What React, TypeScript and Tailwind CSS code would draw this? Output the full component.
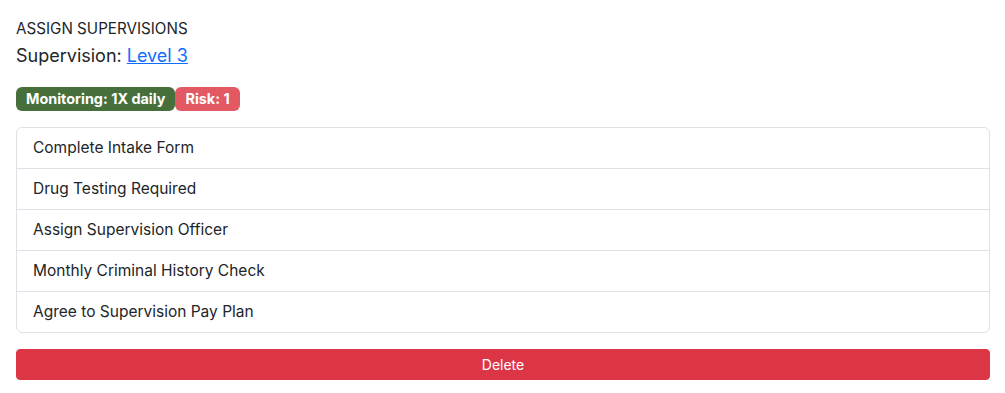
const tasks = [
  "Complete Intake Form",
  "Drug Testing Required",
  "Assign Supervision Officer",
  "Monthly Criminal History Check",
  "Agree to Supervision Pay Plan",
];

export default function App() {
  return (
    <div className="min-h-screen bg-white pl-4 pr-[15px] pt-[18px] font-['Inter',sans-serif] text-[#212529]">
      <div className="text-[15.2px] leading-[22px]">ASSIGN SUPERVISIONS</div>
      <div className="mt-[3px] text-[18px] leading-[26px]">
        Supervision:{" "}
        <a href="#" className="text-[#0d6efd] underline">
          Level 3
        </a>
      </div>

      <div className="mt-[18px] flex">
        <span className="rounded-[6px] bg-[#476f3b] px-[10px] py-[4px] text-[14.4px] font-bold leading-[16px] text-white">
          Monitoring: 1X daily
        </span>
        <span className="rounded-[6px] bg-[#e25963] px-[10px] py-[4px] text-[14.4px] font-bold leading-[16px] text-white">
          Risk: 1
        </span>
      </div>

      <ul className="mt-[16px] rounded-[6px] border border-[#dee2e6]">
        {tasks.map((t, i) => (
          <li
            key={t}
            className={
              "px-4 py-[8px] text-[15.5px] leading-[24px] " +
              (i > 0 ? "border-t border-[#dee2e6]" : "")
            }
          >
            {t}
          </li>
        ))}
      </ul>

      <button className="mt-[16px] w-full rounded-[4px] border border-[#dc3545] bg-[#dc3545] py-[4px] text-[14px] leading-[21px] text-white">
        Delete
      </button>
    </div>
  );
}
